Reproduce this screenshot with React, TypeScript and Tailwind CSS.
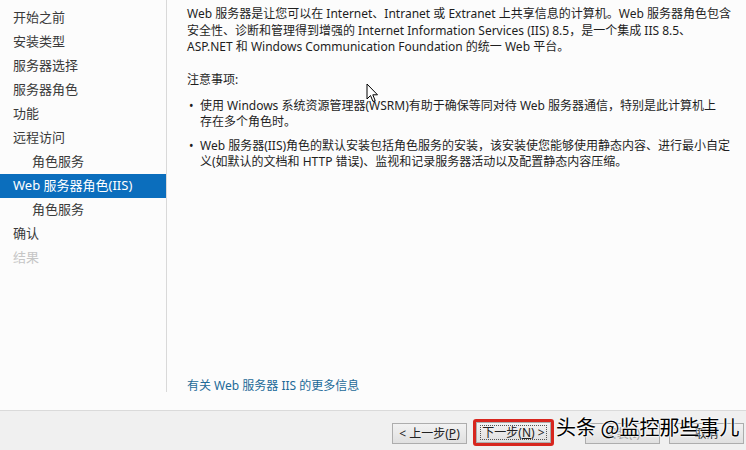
const navItems = [
  { label: "开始之前", indent: false },
  { label: "安装类型", indent: false },
  { label: "服务器选择", indent: false },
  { label: "服务器角色", indent: false },
  { label: "功能", indent: false },
  { label: "远程访问", indent: false },
  { label: "角色服务", indent: true },
  { label: "Web 服务器角色(IIS)", indent: false, active: true },
  { label: "角色服务", indent: true },
  { label: "确认", indent: false },
  { label: "结果", indent: false, disabled: true },
];

const font = "font-['Segoe_UI','Noto_Sans','Noto_Sans_CJK_SC',sans-serif]";

const WinButton = ({ children, disabled, focused }: { children: React.ReactNode; disabled?: boolean; focused?: boolean }) => (
  <div
    className={`flex h-[21px] w-[75px] items-center justify-center border border-[#adadad] bg-gradient-to-b from-[#f2f2f2] to-[#e0e0e0] text-[12px] ${
      disabled ? "text-[#a0a0a0]" : "text-[#222]"
    }`}
  >
    {focused ? (
      <span className="flex h-[15px] w-[67px] items-center justify-center border border-dotted border-[#555]">{children}</span>
    ) : (
      children
    )}
  </div>
);

export default function App() {
  return (
    <div className={`relative h-[450px] w-[746px] overflow-hidden bg-[#fcfcfc] ${font}`}>
      <div className="flex h-[410px] pb-[18px]">
        <div className="w-[167px] shrink-0 border-r border-[#d9d9d9] pt-[6px]">
          {navItems.map((item, i) => (
            <div
              key={i}
              className={`flex h-[24px] items-center whitespace-nowrap text-[13px] ${item.indent ? "pl-[32px]" : "pl-[13px]"} ${
                item.active ? "bg-[#0b6ebd] text-white" : item.disabled ? "text-[#c6c6c6]" : "text-[#3a3a3a]"
              }`}
            >
              {item.label}
            </div>
          ))}
        </div>
        <div className="flex flex-1 flex-col pl-[20px] pt-[6px] text-[12px] leading-[16.5px] text-[#1e1e1e]">
          <p className="whitespace-nowrap">
            Web 服务器是让您可以在 Internet、Intranet 或 Extranet 上共享信息的计算机。Web 服务器角色包含
            <br />
            安全性、诊断和管理得到增强的 Internet Information Services (IIS) 8.5，是一个集成 IIS 8.5、
            <br />
            ASP.NET 和 Windows Communication Foundation 的统一 Web 平台。
          </p>
          <p className="mt-[16px]">注意事项:</p>
          <ul className="mt-[10px] flex flex-col gap-[8px] leading-[16px]">
            <li className="flex whitespace-nowrap">
              <span className="w-[13px] shrink-0 pl-[2px]">•</span>
              <span>
                使用 Windows 系统资源管理器(WSRM)有助于确保等同对待 Web 服务器通信，特别是此计算机上
                <br />
                存在多个角色时。
              </span>
            </li>
            <li className="flex whitespace-nowrap">
              <span className="w-[13px] shrink-0 pl-[2px]">•</span>
              <span>
                Web 服务器(IIS)角色的默认安装包括角色服务的安装，该安装使您能够使用静态内容、进行最小自定
                <br />
                义(如默认的文档和 HTTP 错误)、监视和记录服务器活动以及配置静态内容压缩。
              </span>
            </li>
          </ul>
          <div className="flex-1" />
          <p className="-mb-[2px] text-[#1d6a98]">有关 Web 服务器 IIS 的更多信息</p>
        </div>
      </div>
      <div className="flex h-[40px] items-start border-t border-[#dadada] bg-[#f0f0f0] pl-[392px] pt-[12px]">
        <WinButton>&lt; 上一步(<span className="underline">P</span>)</WinButton>
        <div className="ml-[6px] -mt-[4px] rounded-[3px] border-[3px] border-[#d7261e] p-0">
          <WinButton focused>
            下一步(<span className="underline">N</span>) &gt;
          </WinButton>
        </div>
        <div className="ml-[31px]">
          <WinButton disabled>安装(I)</WinButton>
        </div>
        <div className="ml-[9px]">
          <WinButton>取消</WinButton>
        </div>
      </div>
      <div className="absolute left-[556px] top-[415px] whitespace-nowrap font-['Noto_Sans_CJK_SC',sans-serif] text-[20px] leading-[24px] text-black [text-shadow:0_0_2px_#fff,0_0_2px_#fff,0_0_2px_#fff]">
        头条 @监控那些事儿
      </div>
      <svg className="absolute left-[366px] top-[83px]" width="13" height="20" viewBox="0 0 13 20">
        <path d="M1 1 L1 16 L4.5 12.5 L7 18.5 L9.2 17.6 L6.8 11.8 L11.5 11.8 Z" fill="#fff" stroke="#000" strokeWidth="1" strokeLinejoin="miter" />
      </svg>
    </div>
  );
}
